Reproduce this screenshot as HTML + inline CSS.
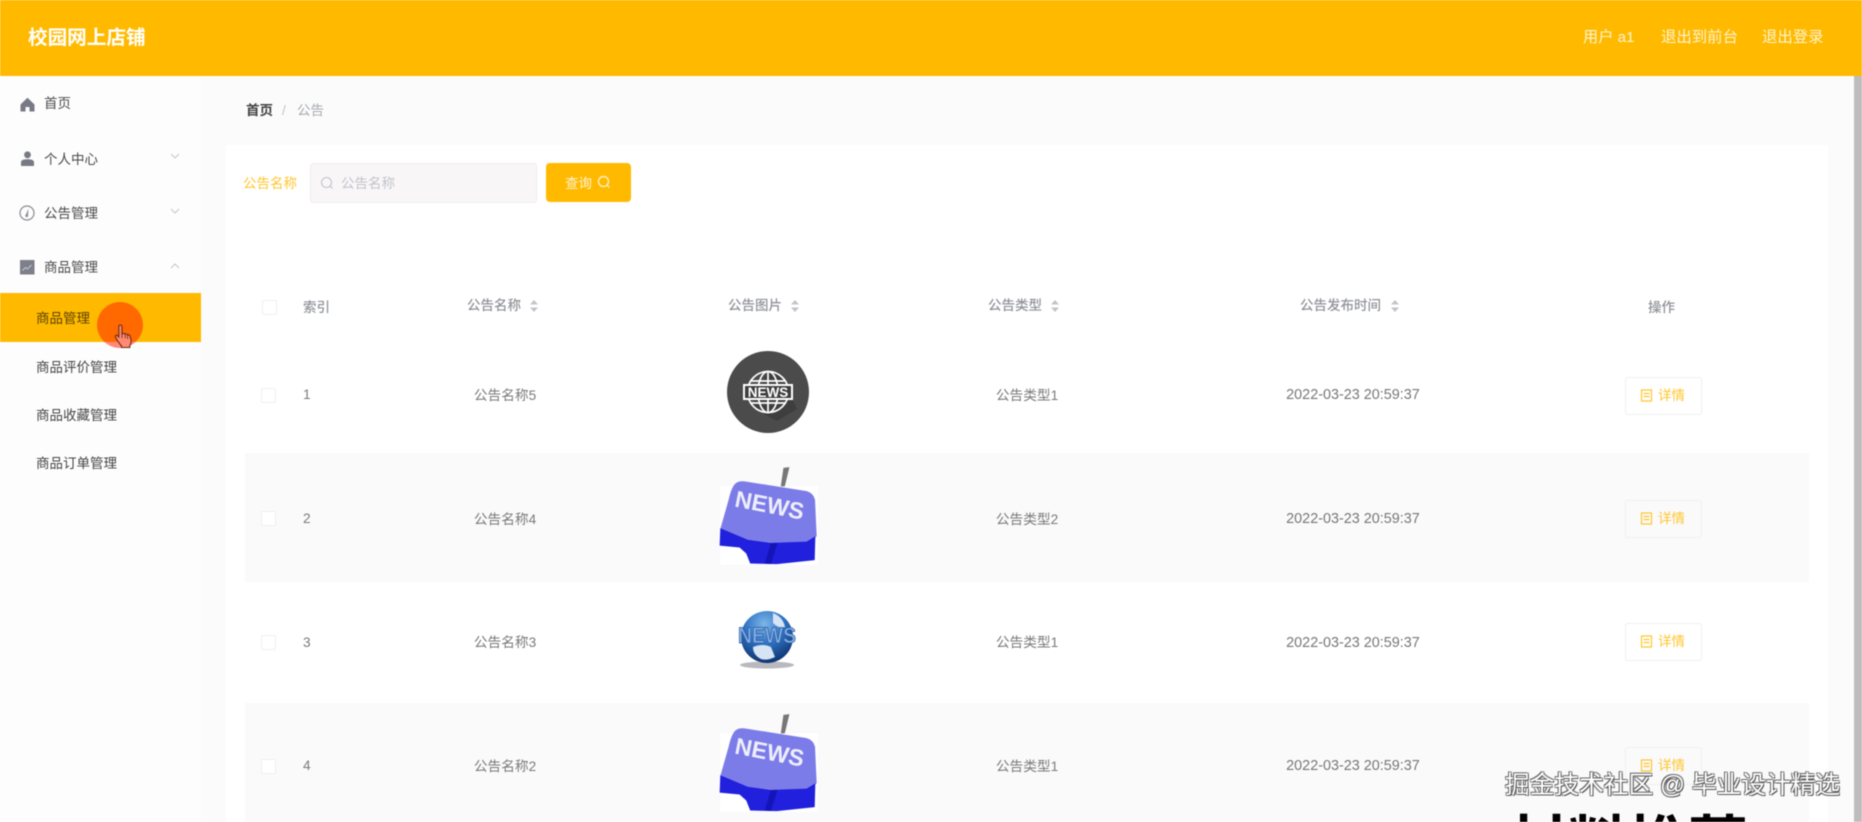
<!DOCTYPE html>
<html lang="zh">
<head>
<meta charset="utf-8">
<title>校园网上店铺</title>
<style>
html,body{margin:0;padding:0;background:#fff;overflow:hidden}
#root{position:relative;width:1862px;height:822px;overflow:hidden;background:#fdfdfd;font-family:"Liberation Sans","Noto Sans CJK SC",sans-serif;filter:blur(.55px)}
#root div,#root svg{position:absolute}
.t{white-space:nowrap;line-height:20px;height:20px}
.c{transform:translateX(-50%);text-align:center}
.nav{left:44px;font-size:13.5px;color:#4a4a4a}
.sub{left:36px;font-size:13.5px;color:#444}
.th{font-size:13.5px;color:#909399;font-weight:500}
.td{font-size:13.7px;color:#7a7a7a}
.tm{font-size:14.4px;color:#777}
.cb{width:13px;height:13px;border:1px solid #efefef;border-radius:2px;background:#fff}
.btn{left:1625px;width:75px;height:36px;border:1px solid #efeff1;border-radius:3px;background:#fff}
.btxt{left:1659px;font-size:13.5px;color:#ffc62e}
</style>
</head>
<body>
<div id="root">
<!-- backgrounds -->
<div style="left:201px;top:76px;width:1661px;height:746px;background:#fbfbfb"></div>
<div style="left:226px;top:145px;width:1602px;height:677px;background:#fff"></div>
<div style="left:1854px;top:76px;width:8px;height:746px;background:#bdbdbd"></div>

<!-- header -->
<div style="left:0;top:0;width:1862px;height:76px;background:#ffba00"></div>
<div class="t" style="left:28px;top:28px;font-size:19.6px;font-weight:700;color:#fff">校园网上店铺</div>
<div class="t" style="left:1583px;top:28px;font-size:15.2px;color:#fff4d2">用户 a1</div>
<div class="t" style="left:1661px;top:28px;font-size:15.4px;color:#fff4d2">退出到前台</div>
<div class="t" style="left:1762px;top:28px;font-size:15.4px;color:#fff4d2">退出登录</div>

<!-- sidebar -->
<svg style="left:20px;top:97px" width="15" height="15" viewBox="0 0 15 15"><path d="M7.500 .8L.5 7.500V14.500H5.500V10H9.500V14.500H14.500V7.500Z" fill="#777a85"/></svg>
<div class="t nav" style="top:94px">首页</div>
<svg style="left:20px;top:151px" width="15" height="15" viewBox="0 0 15 15"><circle cx="7.500" cy="3.800" r="3.400" fill="#777a85"/><path d="M1 15V11.500C1 9.300 3 8.300 7.500 8.300S14 9.300 14 11.500V15Z" fill="#777a85"/></svg>
<div class="t nav" style="top:150px">个人中心</div>
<svg style="left:170px;top:153px" width="10" height="7" viewBox="0 0 10 7"><path d="M1 1l4 4 4-4" fill="none" stroke="#c8c8cc" stroke-width="1.100"/></svg>
<svg style="left:19px;top:205px" width="16" height="16" viewBox="0 0 16 16"><circle cx="8" cy="8" r="7" fill="none" stroke="#8a8c94" stroke-width="1.200"/><path d="M9.500 3.500L7 9.500a1.400 1.400 0 1 0 2 .6Z" fill="#8a8c94"/></svg>
<div class="t nav" style="top:204px">公告管理</div>
<svg style="left:170px;top:208px" width="10" height="7" viewBox="0 0 10 7"><path d="M1 1l4 4 4-4" fill="none" stroke="#c8c8cc" stroke-width="1.100"/></svg>
<svg style="left:20px;top:260px" width="15" height="15" viewBox="0 0 15 15"><rect width="14.500" height="14.500" fill="#7d7f8a"/><path d="M2.500 10.500l3-3 2 1.500 4-4" fill="none" stroke="#c9cad0" stroke-width="1"/></svg>
<div class="t nav" style="top:258px">商品管理</div>
<svg style="left:170px;top:262px" width="10" height="7" viewBox="0 0 10 7"><path d="M1 6l4-4 4 4" fill="none" stroke="#c8c8cc" stroke-width="1.100"/></svg>
<div style="left:0;top:293px;width:201px;height:49px;background:#ffba00"></div>
<div class="t sub" style="top:309px;color:#5c4300">商品管理</div>
<div class="t sub" style="top:358px">商品评价管理</div>
<div class="t sub" style="top:406px">商品收藏管理</div>
<div class="t sub" style="top:454px">商品订单管理</div>

<!-- cursor highlight -->
<div style="left:97px;top:302px;width:46px;height:46px;border-radius:50%;background:rgba(255,30,0,.52)"></div>
<svg style="left:114px;top:324px" width="20" height="25" viewBox="0 0 20 25"><path d="M6 1c1.200 0 2 .8 2 2v7l1-.5c1-.3 1.800 0 2.200.8 1-.5 2-.2 2.400.7 1-.4 2-.1 2.400.9l1 4c.4 2-.2 4-1.200 6v1.600H7.500v-1.600c-1.500-1.500-3-4-4.500-6L1.500 13c-.6-1 .8-2.400 2-1.400l1.300 1.400V3C4.800 1.800 5.400 1 6 1z" fill="#ff8a70" stroke="#6a2a18" stroke-width="1.100"/><path d="M8 10v4M11.200 10.300v4M13.600 11v4" stroke="#6a2a18" stroke-width=".8" fill="none"/></svg>

<!-- breadcrumb -->
<div class="t" style="left:246px;top:101px;font-size:13.5px;color:#444;font-weight:700">首页</div>
<div class="t" style="left:282px;top:101px;font-size:13.5px;color:#c0c4cc">/</div>
<div class="t" style="left:297px;top:101px;font-size:13.5px;color:#a8abb2">公告</div>

<!-- search -->
<div class="t" style="left:243px;top:174px;font-size:13.5px;color:#ffc62e">公告名称</div>
<div style="left:310px;top:163px;width:225px;height:38px;background:#f9f6f7;border:1px solid #eeeeee;border-radius:3px"></div>
<svg style="left:320px;top:176px" width="14" height="14" viewBox="0 0 14 14"><circle cx="6.500" cy="6.500" r="5" fill="none" stroke="#c0c4cc" stroke-width="1.100"/><path d="M10 10l2.500 2.500" stroke="#c0c4cc" stroke-width="1.100"/></svg>
<div class="t" style="left:341px;top:174px;font-size:13.5px;color:#c0c4cc">公告名称</div>
<div style="left:546px;top:163px;width:85px;height:39px;background:#ffba00;border-radius:4px"></div>
<div class="t" style="left:565px;top:174px;font-size:13.5px;color:#fff3d2">查询</div>
<svg style="left:597px;top:175px" width="14" height="14" viewBox="0 0 14 14"><circle cx="6.500" cy="6.500" r="5" fill="none" stroke="#fff3d2" stroke-width="1.200"/><path d="M10 10l2.500 2.500" stroke="#fff3d2" stroke-width="1.200"/></svg>

<!-- table header -->
<div class="cb" style="left:262px;top:300px"></div>
<div class="t th" style="left:303px;top:298px">索引</div>
<div class="t th" style="left:467px;top:296px">公告名称</div>
<div class="t th" style="left:728px;top:296px">公告图片</div>
<div class="t th" style="left:988px;top:296px">公告类型</div>
<div class="t th" style="left:1300px;top:296px">公告发布时间</div>
<div class="t th" style="left:1648px;top:298px">操作</div>
<svg style="left:529px;top:300px" width="10" height="12" viewBox="0 0 10 12"><path d="M5 0l4 4.500H1zM5 12L1 7.500h8z" fill="#c0c4cc"/></svg>
<svg style="left:790px;top:300px" width="10" height="12" viewBox="0 0 10 12"><path d="M5 0l4 4.500H1zM5 12L1 7.500h8z" fill="#c0c4cc"/></svg>
<svg style="left:1050px;top:300px" width="10" height="12" viewBox="0 0 10 12"><path d="M5 0l4 4.500H1zM5 12L1 7.500h8z" fill="#c0c4cc"/></svg>
<svg style="left:1390px;top:300px" width="10" height="12" viewBox="0 0 10 12"><path d="M5 0l4 4.500H1zM5 12L1 7.500h8z" fill="#c0c4cc"/></svg>

<!-- stripes -->
<div style="left:245px;top:453px;width:1564px;height:129px;background:#fafafb"></div>
<div style="left:245px;top:703px;width:1564px;height:119px;background:#fafafb"></div>

<!-- row 1 -->
<div class="cb" style="left:261px;top:388px"></div>
<div class="t td" style="left:303px;top:385px">1</div>
<div class="t td c" style="left:505px;top:386px">公告名称5</div>
<svg style="left:727px;top:351px" width="82" height="82" viewBox="0 0 82 82">
<circle cx="41" cy="41" r="41" fill="#4c4b4c"/>
<path d="M41 20A21 21 0 0 1 62 41L70 58 50 70 24 56Z" fill="#3f3e3f"/>
<g fill="none" stroke="#fff" stroke-width="1.700"><circle cx="41" cy="41" r="20.500"/><ellipse cx="41" cy="41" rx="10" ry="20.500"/><path d="M41 20.500v41M24 30h34M24 52h34"/></g>
<rect x="16" y="33" width="50" height="16" fill="#fff"/>
<rect x="18" y="35" width="46" height="12" fill="#3e3d3e"/>
<text x="41" y="46.200" text-anchor="middle" font-family="Liberation Sans" font-weight="700" font-size="13.500" fill="#fff">NEWS</text>
</svg>
<div class="t td c" style="left:1027px;top:386px">公告类型1</div>
<div class="t tm c" style="left:1353px;top:385px">2022-03-23 20:59:37</div>
<div class="btn" style="top:377px"></div>
<svg style="left:1640px;top:389px" width="13" height="13" viewBox="0 0 13 13"><path d="M1.500 1h10v11h-10zM3.500 4.500h6M3.500 7.500h6" fill="none" stroke="#ffc62e" stroke-width="1.200"/></svg>
<div class="t btxt" style="top:386px;left:1658px">详情</div>

<!-- row 2 -->
<div class="cb" style="left:261px;top:511px"></div>
<div class="t td" style="left:303px;top:509px">2</div>
<div class="t td c" style="left:505px;top:510px">公告名称4</div>
<svg style="left:717px;top:463px" width="103" height="104" viewBox="170 400 310 312">
<path d="M180 470H474V706H180Z" fill="#fff"/>
<path d="M388 412L374 470 362 470 370 414Z" fill="#777"/>
<path d="M230 458Q240 452 260 456L440 484Q460 490 465 510L470 620 445 640 340 640 262 630 180 598 205 510Q215 465 230 458Z" fill="#7c7ce8"/>
<path d="M180 596L262 630 335 640 440 636 466 620 464 692 350 704 270 702 258 672 238 654 178 648Z" fill="#2020dd"/>
<path d="M332 640L352 640 332 704 314 702Z" fill="#1414b8"/>
<text x="324" y="550" transform="rotate(11 324 550)" text-anchor="middle" font-family="Liberation Sans" font-weight="700" font-size="70" fill="#eeeefc">NEWS</text>
</svg>
<div class="t td c" style="left:1027px;top:510px">公告类型2</div>
<div class="t tm c" style="left:1353px;top:509px">2022-03-23 20:59:37</div>
<div class="btn" style="top:500px;background:#fafafb"></div>
<svg style="left:1640px;top:512px" width="13" height="13" viewBox="0 0 13 13"><path d="M1.500 1h10v11h-10zM3.500 4.500h6M3.500 7.500h6" fill="none" stroke="#ffc62e" stroke-width="1.200"/></svg>
<div class="t btxt" style="top:509px;left:1658px">详情</div>

<!-- row 3 -->
<div class="cb" style="left:261px;top:635px"></div>
<div class="t td" style="left:303px;top:633px">3</div>
<div class="t td c" style="left:505px;top:633px">公告名称3</div>
<svg style="left:735px;top:605px" width="64" height="64" viewBox="0 0 64 64">
<defs><radialGradient id="g" cx="45%" cy="25%" r="75%"><stop offset="0" stop-color="#7db6e8"/><stop offset=".5" stop-color="#2f74c4"/><stop offset="1" stop-color="#0f3470"/></radialGradient></defs>
<ellipse cx="32" cy="60" rx="27" ry="3.500" fill="#9a9aa2" opacity=".7"/>
<circle cx="32" cy="32" r="26" fill="url(#g)"/>
<path d="M18 42q10-4 18 0l4 10q-8 4-14 2-8-4-8-12zM38 8q10 4 12 14-6 2-12-4z" fill="#d6e4f4"/>
<text x="32" y="38" text-anchor="middle" font-family="Liberation Sans" font-weight="700" font-size="22" textLength="58" lengthAdjust="spacingAndGlyphs" fill="#82ade6" stroke="#2a5a9c" stroke-width=".7">NEWS</text>
</svg>
<div class="t td c" style="left:1027px;top:633px">公告类型1</div>
<div class="t tm c" style="left:1353px;top:633px">2022-03-23 20:59:37</div>
<div class="btn" style="top:623px"></div>
<svg style="left:1640px;top:635px" width="13" height="13" viewBox="0 0 13 13"><path d="M1.500 1h10v11h-10zM3.500 4.500h6M3.500 7.500h6" fill="none" stroke="#ffc62e" stroke-width="1.200"/></svg>
<div class="t btxt" style="top:632px;left:1658px">详情</div>

<!-- row 4 -->
<div class="cb" style="left:261px;top:759px"></div>
<div class="t td" style="left:303px;top:756px">4</div>
<div class="t td c" style="left:505px;top:757px">公告名称2</div>
<svg style="left:717px;top:710px" width="103" height="104" viewBox="170 400 310 312">
<path d="M180 470H474V706H180Z" fill="#fff"/>
<path d="M388 412L374 470 362 470 370 414Z" fill="#777"/>
<path d="M230 458Q240 452 260 456L440 484Q460 490 465 510L470 620 445 640 340 640 262 630 180 598 205 510Q215 465 230 458Z" fill="#7c7ce8"/>
<path d="M180 596L262 630 335 640 440 636 466 620 464 692 350 704 270 702 258 672 238 654 178 648Z" fill="#2020dd"/>
<path d="M332 640L352 640 332 704 314 702Z" fill="#1414b8"/>
<text x="324" y="550" transform="rotate(11 324 550)" text-anchor="middle" font-family="Liberation Sans" font-weight="700" font-size="70" fill="#eeeefc">NEWS</text>
</svg>
<div class="t td c" style="left:1027px;top:757px">公告类型1</div>
<div class="t tm c" style="left:1353px;top:756px">2022-03-23 20:59:37</div>
<div class="btn" style="top:747px;background:#fafafb"></div>
<svg style="left:1640px;top:759px" width="13" height="13" viewBox="0 0 13 13"><path d="M1.500 1h10v11h-10zM3.500 4.500h6M3.500 7.500h6" fill="none" stroke="#ffc62e" stroke-width="1.200"/></svg>
<div class="t btxt" style="top:756px;left:1658px">详情</div>

<!-- watermark -->
<div class="t" style="left:1505px;top:773px;height:26px;line-height:26px;font-size:24.700px;color:#fff;text-shadow:-1px -1px 0 #666,1px 1px 0 #555,1px -1px 0 #888,-1px 1px 0 #888">掘金技术社区 @ 毕业设计精选</div>
<div class="t" style="left:1508px;top:813px;height:9px;line-height:64px;overflow:hidden;font-size:60px;font-weight:700;color:#000">材料推荐</div>
</div>
</body>
</html>
